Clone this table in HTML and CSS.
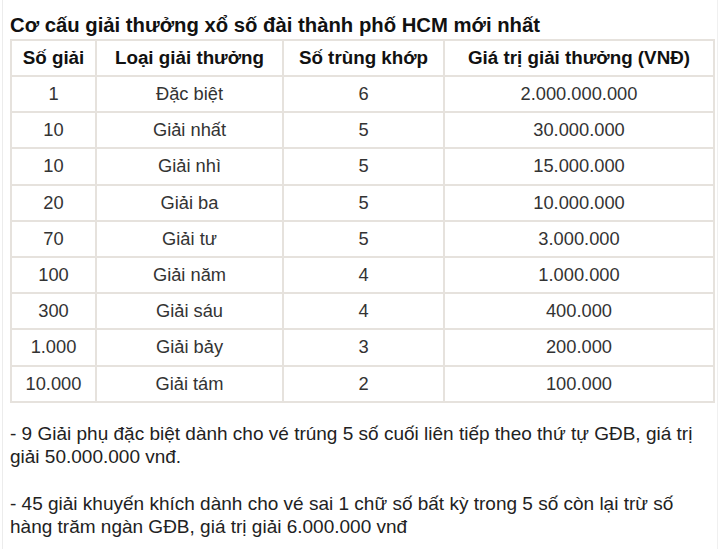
FILE: index.html
```html
<!DOCTYPE html>
<html lang="vi">
<head>
<meta charset="utf-8">
<link rel="stylesheet" href="styles.css">
</head>
<body>
<div class="page">
  <h2 class="title">Cơ cấu giải thưởng xổ số đài thành phố HCM mới nhất</h2>
  <table class="prizes">
    <colgroup>
      <col class="c1"><col class="c2"><col class="c3"><col class="c4">
    </colgroup>
    <thead>
      <tr><th>Số giải</th><th>Loại giải thưởng</th><th>Số trùng khớp</th><th>Giá trị giải thưởng (VNĐ)</th></tr>
    </thead>
    <tbody>
      <tr><td>1</td><td>Đặc biệt</td><td>6</td><td>2.000.000.000</td></tr>
      <tr><td>10</td><td>Giải nhất</td><td>5</td><td>30.000.000</td></tr>
      <tr><td>10</td><td>Giải nhì</td><td>5</td><td>15.000.000</td></tr>
      <tr><td>20</td><td>Giải ba</td><td>5</td><td>10.000.000</td></tr>
      <tr><td>70</td><td>Giải tư</td><td>5</td><td>3.000.000</td></tr>
      <tr><td>100</td><td>Giải năm</td><td>4</td><td>1.000.000</td></tr>
      <tr><td>300</td><td>Giải sáu</td><td>4</td><td>400.000</td></tr>
      <tr><td>1.000</td><td>Giải bảy</td><td>3</td><td>200.000</td></tr>
      <tr><td>10.000</td><td>Giải tám</td><td>2</td><td>100.000</td></tr>
    </tbody>
  </table>
  <p class="note">- 9 Giải phụ đặc biệt dành cho vé trúng 5 số cuối liên tiếp theo thứ tự GĐB, giá trị giải 50.000.000 vnđ.</p>
  <p class="note">- 45 giải khuyến khích dành cho vé sai 1 chữ số bất kỳ trong 5 số còn lại trừ số hàng trăm ngàn GĐB, giá trị giải 6.000.000 vnđ</p>
  <p class="more">Người trúng thưởng xổ số đài thành phố HCM nhận giải ở đâu?</p>
</div>
</body>
</html>
```

FILE: styles.css
```css
html, body {
  margin: 0;
  padding: 0;
  background: #ffffff;
}

body {
  font-family: "Liberation Sans", Arial, sans-serif;
  color: #222222;
  overflow: hidden;
  height: 549px;
}

.page {
  width: 716px;
  margin-left: 2px;
  border-left: 1px solid #ececec;
  border-right: 1px solid #f0f0f0;
  padding: 12px 20px 0 7px;
  box-sizing: border-box;
  min-height: 549px;
}

.title {
  margin: 0;
  font-size: 20.3px;
  line-height: 26px;
  font-weight: bold;
  color: #111111;
  white-space: nowrap;
}

.prizes {
  width: 703px;
  border-collapse: collapse;
  table-layout: fixed;
  margin-top: 1px;
}

.c1 { width: 85px; }
.c2 { width: 187px; }
.c3 { width: 161px; }
.c4 { width: 270px; }

.prizes th,
.prizes td {
  border: 2px solid #e6e2dd;
  text-align: center;
  font-size: 18.3px;
  height: 34.2px;
  padding: 0;
  color: #333333;
}

.prizes th {
  font-size: 18.8px;
  height: 34px;
  font-weight: bold;
  color: #111111;
}

.note {
  margin: 19px 0 24px;
  font-size: 19px;
  line-height: 23px;
  color: #222222;
}

.more {
  margin: -15px 0 0;
  font-size: 19px;
  line-height: 23px;
  color: #222222;
}
```
